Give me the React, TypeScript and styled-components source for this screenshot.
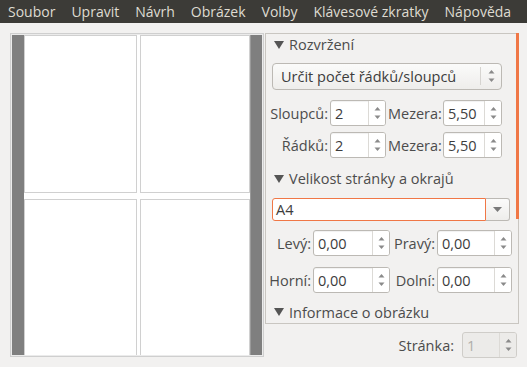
import { createGlobalStyle, styled } from 'styled-components';

const GlobalStyles = createGlobalStyle`
  html, body {
    margin: 0;
    padding: 0;
    background: #f2f1f0;
    font-family: "Open Sans", "DejaVu Sans", sans-serif;
    color: #3c3c3c;
  }
`;

const menuItems = ['Soubor', 'Upravit', 'Návrh', 'Obrázek', 'Volby', 'Klávesové zkratky', 'Nápověda'];

function Arrows() {
  return (
    <svg width="7" height="16" viewBox="0 0 7 16">
      <polygon points="3.5,2 6.5,5.5 0.5,5.5" fill="#8a8a8a" />
      <polygon points="3.5,14 6.5,10.5 0.5,10.5" fill="#8a8a8a" />
    </svg>
  );
}

function Spin({ value, width, disabled }: { value: string; width: number; disabled?: boolean }) {
  return (
    <SpinBox $width={width} $disabled={disabled}>
      <SpinValue>{value}</SpinValue>
      <SpinBtn $disabled={disabled}>
        <Arrows />
      </SpinBtn>
    </SpinBox>
  );
}

function Expander({ title, mt }: { title: string; mt: number }) {
  return (
    <Header $mt={mt}>
      <svg width="10" height="8" viewBox="0 0 10 8">
        <polygon points="0,0 10,0 5,8" fill="#555" />
      </svg>
      <span>{title}</span>
    </Header>
  );
}

function App() {
  return (
    <>
      <GlobalStyles />
      <MenuBar>
        {menuItems.map((m) => (
          <MenuItem key={m}>{m}</MenuItem>
        ))}
      </MenuBar>
      <Main>
        <Preview>
          <Sheet>
            <Canvas>
              <Page />
              <Page />
              <Page />
              <Page />
            </Canvas>
          </Sheet>
        </Preview>
        <Side>
          <Panel>
            <Scroll />
            <Expander title="Rozvržení" mt={0} />
            <Combo>
              <span>Určit počet řádků/sloupců</span>
              <ComboBtn>
                <Arrows />
              </ComboBtn>
            </Combo>
            <FieldRow $cols="62px 56px 53px 59px" $mt={10}>
              <Label>Sloupců:</Label>
              <Spin value="2" width={56} />
              <Label>Mezera:</Label>
              <Spin value="5,50" width={59} />
            </FieldRow>
            <FieldRow $cols="62px 56px 53px 59px" $mt={6}>
              <Label>Řádků:</Label>
              <Spin value="2" width={56} />
              <Label>Mezera:</Label>
              <Spin value="5,50" width={59} />
            </FieldRow>
            <Expander title="Velikost stránky a okrajů" mt={10} />
            <EntryCombo>
              <EntryField>A4</EntryField>
              <DropBtn>
                <svg width="9" height="5" viewBox="0 0 9 5">
                  <polygon points="0,0 9,0 4.5,5" fill="#7a7a7a" />
                </svg>
              </DropBtn>
            </EntryCombo>
            <FieldRow $cols="45px 77px 43px 75px" $mt={9}>
              <Label>Levý:</Label>
              <Spin value="0,00" width={77} />
              <Label>Pravý:</Label>
              <Spin value="0,00" width={75} />
            </FieldRow>
            <FieldRow $cols="45px 77px 43px 75px" $mt={11}>
              <Label>Horní:</Label>
              <Spin value="0,00" width={77} />
              <Label>Dolní:</Label>
              <Spin value="0,00" width={75} />
            </FieldRow>
            <Expander title="Informace o obrázku" mt={8} />
          </Panel>
          <Footer>
            <Label>Stránka:</Label>
            <Spin value="1" width={55} disabled />
          </Footer>
        </Side>
      </Main>
    </>
  );
}

const MenuBar = styled.div`
  height: 23px;
  background: #3c3b37;
  display: flex;
  align-items: center;
`;

const MenuItem = styled.div`
  color: #dfdbd2;
  font-size: 14px;
  padding: 0 8px;
  line-height: 23px;
`;

const Main = styled.div`
  display: flex;
  padding: 10px 0 0 10px;
`;

const Preview = styled.div`
  width: 250px;
  height: 320px;
  border: 1px solid #cfcfcf;
  padding: 1px;
  background: #ebebeb;
`;

const Sheet = styled.div`
  height: 100%;
  background: #7f7f7f;
  padding: 0 11px 0 12px;
  overflow: hidden;
`;

const Canvas = styled.div`
  background: #fff;
  height: 100%;
  display: grid;
  grid-template-columns: 113px 110px;
  grid-template-rows: 158px 158px;
  column-gap: 3px;
  row-gap: 6px;
  border-right: 1px solid #9a9a9a;
  overflow: hidden;
`;

const Page = styled.div`
  border: 1px solid #d0d0d0;
  background: #fff;
`;

const Side = styled.div`
  width: 254px;
  margin-left: 1px;
  display: flex;
  flex-direction: column;
`;

const Panel = styled.div`
  position: relative;
  height: 289px;
  border: 1px solid #c9c6c1;
  padding: 0 0 0 6px;
  display: flex;
  flex-direction: column;
`;

const Scroll = styled.div`
  position: absolute;
  right: -1px;
  top: -1px;
  width: 3px;
  height: 186px;
  background: #f07746;
`;

const Header = styled.div<{ $mt: number }>`
  margin-top: ${(p) => p.$mt}px;
  height: 22px;
  display: flex;
  align-items: center;
  gap: 5px;
  font-size: 14.5px;
  color: #4c4c4c;
  padding-left: 2px;
`;

const Combo = styled.div`
  margin-top: 7px;
  width: 230px;
  height: 28px;
  box-sizing: border-box;
  border: 1px solid #bcb9b4;
  border-radius: 4px;
  background: linear-gradient(#fbfbfa, #eeedeb);
  display: flex;
  align-items: center;
  justify-content: space-between;
  padding-left: 8px;
  font-size: 14.5px;
  color: #3c3c3c;
`;

const ComboBtn = styled.div`
  height: 18px;
  width: 10px;
  padding: 0 5px;
  border-left: 1px solid #d6d4d0;
  display: flex;
  align-items: center;
  justify-content: center;
`;

const FieldRow = styled.div<{ $cols: string; $mt: number }>`
  margin-top: ${(p) => p.$mt}px;
  margin-left: -6px;
  display: grid;
  grid-template-columns: ${(p) => p.$cols};
  column-gap: 2px;
  align-items: center;
`;

const Label = styled.div`
  text-align: right;
  font-size: 14.5px;
  color: #4c4c4c;
  white-space: nowrap;
`;

const SpinBox = styled.div<{ $width: number; $disabled?: boolean }>`
  width: ${(p) => p.$width}px;
  height: 26px;
  box-sizing: border-box;
  border: 1px solid ${(p) => (p.$disabled ? '#cfcdc9' : '#bcb9b4')};
  border-radius: 3px;
  background: ${(p) => (p.$disabled ? '#ecebe9' : '#fff')};
  color: ${(p) => (p.$disabled ? '#b0aeaa' : '#3c3c3c')};
  display: flex;
  align-items: center;
  box-shadow: ${(p) => (p.$disabled ? 'none' : 'inset 0 1px 1px rgba(0,0,0,0.06)')};
`;

const SpinValue = styled.div`
  flex: 1;
  padding-left: 4px;
  font-size: 14.5px;
`;

const SpinBtn = styled.div<{ $disabled?: boolean }>`
  width: 16px;
  height: 24px;
  border-left: 1px solid #dcdad6;
  background: ${(p) => (p.$disabled ? '#ecebe9' : '#fff')};
  border-radius: 0 2px 2px 0;
  display: flex;
  align-items: center;
  justify-content: center;
`;

const EntryCombo = styled.div`
  margin-top: 8px;
  width: 238px;
  height: 24px;
  display: flex;
`;

const EntryField = styled.div`
  flex: 1;
  box-sizing: border-box;
  border: 1px solid #f07746;
  border-radius: 3px 0 0 3px;
  background: #fff;
  font-size: 14.5px;
  color: #3c3c3c;
  display: flex;
  align-items: center;
  padding-left: 3px;
`;

const DropBtn = styled.div`
  width: 24px;
  box-sizing: border-box;
  border: 1px solid #bcb9b4;
  border-left: none;
  border-radius: 0 3px 3px 0;
  background: linear-gradient(#fbfbfa, #eeedeb);
  display: flex;
  align-items: center;
  justify-content: center;
`;

const Footer = styled.div`
  margin-top: 8px;
  display: flex;
  justify-content: flex-end;
  align-items: center;
  gap: 8px;
  padding-right: 2px;
`;

export default App;
